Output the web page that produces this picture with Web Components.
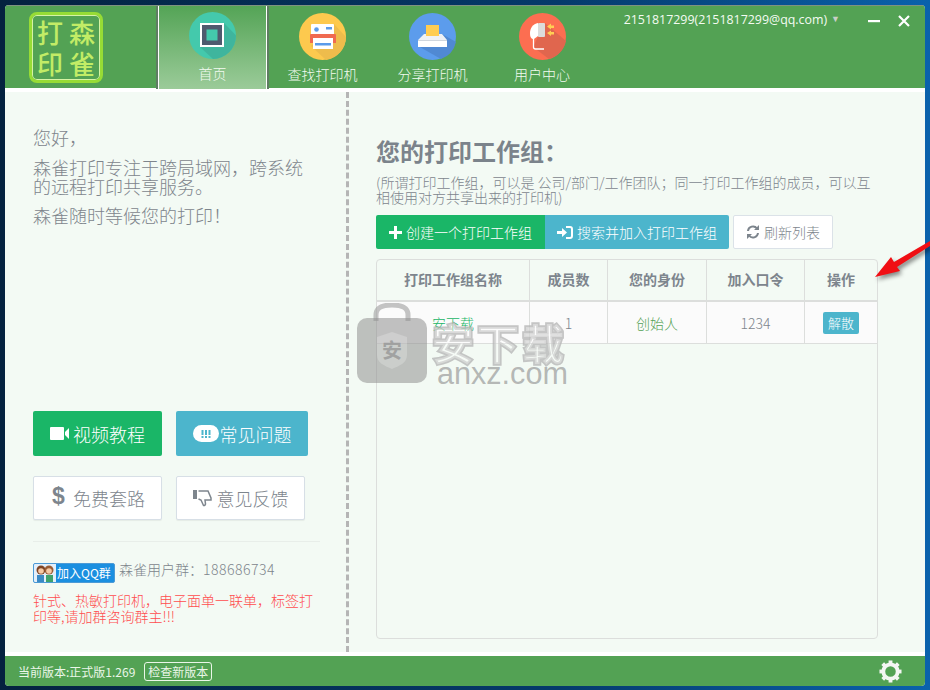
<!DOCTYPE html>
<html lang="zh-CN">
<head>
<meta charset="utf-8">
<title>森雀打印</title>
<style>
    html, body { margin: 0; height: 100%; }
    body {
        position: relative;
        width: 930px;
        height: 690px;
        overflow: hidden;
        background: linear-gradient(90deg, #04223f 0%, #053a6b 60%, #0a62ac 100%);
        font-family: "Noto Sans CJK SC", "Liberation Sans", sans-serif;
    }
</style>
</head>
<body>
<app-window>
    <nav-bar slot="top"></nav-bar>
    <side-panel slot="left"></side-panel>
    <group-panel slot="right"></group-panel>
    <status-bar slot="bottom"></status-bar>
</app-window>
<red-arrow></red-arrow>

<script>
    (function () {
        'use strict';

        const FONT = '"Noto Sans CJK SC", "Liberation Sans", sans-serif';

        function define(name, html) {
            customElements.define(name, class extends HTMLElement {
                constructor() {
                    super();
                    this.attachShadow({mode: 'open'}).innerHTML = html;
                }
            });
        }

        define('app-window', `
            <style>
                :host {
                    display: flex;
                    flex-direction: column;
                    position: relative;
                    box-sizing: border-box;
                    width: 920px;
                    height: 681px;
                    margin: 5px;
                    background: #fff;
                    border-radius: 4px;
                    overflow: hidden;
                    font-family: ${FONT};
                }
                .top { display: block; height: 83px; flex: none; }
                .middle {
                    display: flex;
                    flex: 1;
                    min-height: 0;
                    margin-top: 4px;
                    background: #f3faf4;
                }
                .bottom { display: block; margin-top: 4px; flex: none; }
                .mark { position: absolute; left: 352px; top: 298px; }
            </style>
            <div class="top"><slot name="top"></slot></div>
            <div class="middle">
                <slot name="left"></slot>
                <slot name="right"></slot>
            </div>
            <div class="bottom"><slot name="bottom"></slot></div>
            <water-mark class="mark"></water-mark>
        `);

        // sits on the page, not in the window: it runs out over the desktop
        define('red-arrow', `
            <style>
                :host { display: block; position: absolute; left: 870px; top: 235px; width: 60px; height: 50px; }
                svg { display: block; overflow: visible; filter: drop-shadow(2px 3px 2px rgba(0, 0, 0, .45)); }
            </style>
            <svg width="60" height="50" viewBox="0 0 60 50">
                <path d="M5 42 L21 22 L24 27 L60 6 L60 11 L27 32 L30 36 Z" fill="#f00f14"/>
            </svg>
        `);

        define('water-mark', `
            <style>
                :host {
                    display: block;
                    width: 220px;
                    height: 84px;
                    pointer-events: none;
                }
                .box { display: flex; gap: 5px; }
                .badge { flex: none; display: block; }
                .words { display: flex; flex-direction: column; }
                .cn {
                    font: 700 42px/42px "Noto Sans CJK SC", sans-serif;
                    letter-spacing: 3px;
                    color: rgba(255, 255, 255, .35);
                    -webkit-text-stroke: 3.5px #b4b4b4;
                    paint-order: stroke fill;
                    opacity: .75;
                    margin-top: 18px;
                    white-space: nowrap;
                }
                .en {
                    font: 30.6px/30px "Liberation Sans", sans-serif;
                    color: rgba(150, 150, 150, .68);
                    margin: -5px 0 0 5px;
                    white-space: nowrap;
                }
            </style>
            <div class="box">
                <svg class="badge" width="70" height="80" viewBox="0 0 70 80">
                    <path d="M19 18 V12 C19 5 24 2 35 2 C46 2 51 5 51 12 V18" fill="none" stroke="#9e9e9e" stroke-opacity=".6" stroke-width="5"/>
                    <rect x="0" y="15" width="70" height="65" rx="10" fill="#8f8f8f" fill-opacity=".55"/>
                    <path d="M20 34 L35 29 L50 34 V52 C50 60 42 63 35 66 C28 63 20 60 20 52 Z" fill="#fff" fill-opacity=".22"/>
                    <text x="35" y="55" font-size="20" font-weight="700" text-anchor="middle" fill="#8f8f8f" fill-opacity=".7">安</text>
                </svg>
                <div class="words">
                    <div class="cn">安下载</div>
                    <div class="en">anxz.com</div>
                </div>
            </div>
        `);

        define('nav-item', `
            <style>
                :host {
                    display: flex;
                    flex-direction: column;
                    align-items: center;
                    box-sizing: border-box;
                    width: var(--w, 110px);
                    height: 83px;
                    padding-top: 7px;
                    color: #fff;
                    font-size: 14px;
                    font-weight: 300;
                }
                :host([active]) {
                    padding-top: 6px;
                    background: linear-gradient(180deg, #54a456 0%, #9bcb99 100%);
                    border-left: 1px solid #fff;
                    border-right: 1px solid #fff;
                    box-shadow: -2px 0 0 #5f7d62, 2px 0 0 #5f7d62;
                }
                .icon { width: 47px; height: 47px; display: block; }
                .label { margin-top: 6px; line-height: 17px; white-space: nowrap; color: #f2faf0; }
            </style>
            <div class="icon"><slot name="icon"></slot></div>
            <div class="label"><slot></slot></div>
        `);

        define('nav-bar', `
            <style>
                :host {
                    display: flex;
                    box-sizing: border-box;
                    height: 83px;
                    background: #53a254;
                    border-top: 1px solid #7f9280;
                    position: relative;
                    color: #fff;
                }
                .logo {
                    flex: none;
                    box-sizing: border-box;
                    width: 74px;
                    height: 71px;
                    margin: 6px 0 0 24px;
                    border: 3px solid #97dc35;
                    box-shadow: inset 0 0 0 1px #d6f3a4;
                    border-radius: 8px;
                    display: grid;
                    grid-template-columns: 1fr 1fr;
                    justify-items: center;
                    align-items: center;
                    color: #c2ec66;
                    padding: 1px 2px;
                }
                .logo span { font: 500 26px/30px "Noto Sans CJK SC", sans-serif; }
                .items { display: flex; margin-left: 55px; }
                nav-item:nth-child(1) { --w: 109px; }
                nav-item:nth-child(2) { --w: 111px; }
                nav-item:nth-child(3) { --w: 109px; }
                nav-item:nth-child(4) { --w: 110px; }
                .account {
                    margin-left: auto;
                    display: flex;
                    align-items: flex-start;
                    padding: 7px 15px 0 0;
                    font: 12.4px/14px "Open Sans", "Liberation Sans", sans-serif;
                    color: #f4fbf2;
                }
                .caret { font-size: 9px; color: #c8cfc8; margin: -1px 0 0 4px; }
                .win { display: flex; gap: 18px; margin: 2px 0 0 28px; }
                svg { display: block; }
            </style>
            <div class="logo"><span>打</span><span>森</span><span>印</span><span>雀</span></div>
            <div class="items">
                <nav-item active>
                    <svg slot="icon" width="47" height="47" viewBox="0 0 47 47">
                        <circle cx="23.5" cy="23.5" r="23.5" fill="#44c9ac"/>
                        <path d="M35 11 L47 23.5 A23.5 23.5 0 0 1 24 47 L11 35 Z" fill="#3fb59d"/>
                        <rect x="11" y="11" width="24" height="24" fill="#fff"/>
                        <rect x="13" y="13" width="20" height="20" fill="#4f5a6e"/>
                        <rect x="17.5" y="17.5" width="11" height="11" fill="#44c9ac"/>
                    </svg>
                    首页
                </nav-item>
                <nav-item>
                    <svg slot="icon" width="47" height="47" viewBox="0 0 47 47">
                        <circle cx="23.5" cy="23.5" r="23.5" fill="#fdc94e"/>
                        <path d="M35 11 L47 24 A23.5 23.5 0 0 1 27 47 L12 33 Z" fill="#eebc4c"/>
                        <rect x="12" y="11" width="23" height="11" rx="1" fill="#fff"/>
                        <circle cx="17.5" cy="16.5" r="2.3" fill="#5b9bea"/>
                        <rect x="27" y="14" width="6" height="2.5" fill="#5b9bea"/>
                        <path d="M12 21 H36 Q37 21 37 22 V30 H34 V25 H14 V30 H11 V22 Q11 21 12 21 Z" fill="#f06a50"/>
                        <rect x="14" y="25" width="20" height="11" fill="#fff"/>
                        <rect x="16" y="30" width="16" height="2.5" fill="#5b9bea"/>
                    </svg>
                    查找打印机
                </nav-item>
                <nav-item>
                    <svg slot="icon" width="47" height="47" viewBox="0 0 47 47">
                        <circle cx="23.5" cy="23.5" r="23.5" fill="#5c9cec"/>
                        <path d="M33 21 L47 29 A23.5 23.5 0 0 1 32 46 L9 33 Z" fill="#5089d3"/>
                        <rect x="17" y="12" width="13" height="11" fill="#ffcd52"/>
                        <path d="M15 21 H17 V23 H30 V21 H33 L38 27 H9 Z" fill="#eef1f5"/>
                        <rect x="9" y="27" width="29" height="7" fill="#fff"/>
                        <rect x="9" y="27" width="29" height="1" fill="#cfd6de"/>
                    </svg>
                    分享打印机
                </nav-item>
                <nav-item>
                    <svg slot="icon" width="47" height="47" viewBox="0 0 47 47">
                        <circle cx="23.5" cy="23.5" r="23.5" fill="#fc6e51"/>
                        <path d="M26 10 L47 28 A23.5 23.5 0 0 1 30 46 L14 34 Z" fill="#e0664e"/>
                        <path d="M19 10 C14 11 11 15 11 20 C11 24 12 26 15 26 L19 23 Z" fill="#fff"/>
                        <rect x="19" y="10" width="7" height="14" rx="1" fill="#dcdcdc"/>
                        <path d="M14.5 26 V34 Q14.5 36 16.5 36 H25" fill="none" stroke="#fff" stroke-width="1.3"/>
                        <path d="M28 13.5 L32 10.5 V12.5 H35 V15 H32 V16.5 Z M28 20 L32 17.5 V19 H35 V21.5 H32 V23 Z" fill="#ffce54"/>
                    </svg>
                    用户中心
                </nav-item>
            </div>
            <div class="account">
                <span>2151817299(2151817299@qq.com)</span>
                <span class="caret">▼</span>
                <div class="win">
                    <svg width="12" height="12" viewBox="0 0 12 12"><rect x="0" y="5" width="12" height="2.2" fill="#fff"/></svg>
                    <svg width="12" height="12" viewBox="0 0 12 12"><path d="M1 1 L11 11 M11 1 L1 11" stroke="#fff" stroke-width="2.2" fill="none"/></svg>
                </div>
            </div>
        `);

        define('big-button', `
            <style>
                :host {
                    display: flex;
                    align-items: center;
                    justify-content: center;
                    box-sizing: border-box;
                    height: var(--h, 45px);
                    width: var(--w, 129px);
                    border-radius: 2px;
                    font-size: 18px;
                    white-space: nowrap;
                    gap: var(--gap, 4px);
                }
                :host([kind=green]) { background: #1ab667; color: #fff; }
                :host([kind=blue]) { background: #4cb5cc; color: #fff; }
                :host([kind=plain]) {
                    background: #fff;
                    color: #7d858d;
                    border: 1px solid #d7dfe6;
                    box-shadow: 0 1px 1px rgba(0, 0, 0, .06);
                }
            </style>
            <slot name="icon"></slot><slot></slot>
        `);

        define('side-panel', `
            <style>
                :host {
                    display: flex;
                    flex-direction: column;
                    box-sizing: border-box;
                    flex: none;
                    width: 344px;
                    padding: 36px 26px 0 28px;
                    border-right: 3px dashed #b5b5b5;
                    color: #7e858c;
                    font-size: 18px;
                    font-weight: 300;
                    position: relative;
                }
                p { margin: 0; line-height: 19px; }
                .hello { height: 30px; }
                .intro { width: 285px; margin-bottom: 10px; }
                .grid {
                    display: grid;
                    grid-template-columns: 129px 132px;
                    column-gap: 14px;
                    row-gap: 20px;
                    margin-top: 186px;
                }
                .rule { height: 1px; background: #e8eee9; margin-top: 21px; }
                .qq { display: flex; align-items: flex-start; gap: 4px; margin-top: 21px; font-size: 14px; line-height: 14px; }
                .qq .num { letter-spacing: .5px; }
                .qq .group { margin-top: -1px; }
                .qqbtn {
                    display: flex;
                    align-items: center;
                    box-sizing: border-box;
                    width: 82px;
                    height: 20px;
                    background: #1b8fe0;
                    border: 1px solid #4c9ad6;
                    border-radius: 2px;
                    color: #fff;
                    font-size: 12px;
                    font-weight: 400;
                    white-space: nowrap;
                    overflow: hidden;
                }
                .qqbtn .face { flex: none; width: 22px; height: 18px; background: #e3effa; margin-right: 1px; display: block; }
                .warn { margin-top: 9px; font-size: 14px; line-height: 16px; color: #ff4d4f; width: 285px; }
                svg { display: block; }
            </style>
            <p class="hello">您好，</p>
            <p class="intro">森雀打印专注于跨局域网，跨系统的远程打印共享服务。</p>
            <p>森雀随时等候您的打印！</p>
            <div class="grid">
                <big-button kind="green">
                    <svg slot="icon" width="19" height="13" viewBox="0 0 19 13"><rect width="14" height="13" rx="1" fill="#fff"/><path d="M15 5 L19 1 V12 L15 8 Z" fill="#fff"/></svg>
                    视频教程
                </big-button>
                <big-button kind="blue" style="--w:132px;--gap:1px">
                    <svg slot="icon" width="26" height="17" viewBox="0 0 26 17"><rect width="26" height="17" rx="8.5" fill="#fff"/><path d="M8.5 5 H10.5 V10 H8.5 Z M12 5 H14 V10 H12 Z M15.5 5 H17.5 V10 H15.5 Z M8.5 11 H10.5 V13 H8.5 Z M12 11 H14 V13 H12 Z M15.5 11 H17.5 V13 H15.5 Z" fill="#4cb5cc"/></svg>
                    常见问题
                </big-button>
                <big-button kind="plain" style="--h:44px;--gap:8px;padding-left:2px">
                    <span slot="icon" style="font:700 23px/23px 'Liberation Sans',sans-serif;margin-top:-3px">$</span>
                    免费套路
                </big-button>
                <big-button kind="plain" style="--h:44px;--gap:5px">
                    <svg slot="icon" width="19" height="18" viewBox="0 0 19 18"><rect x="0" y="1" width="4" height="9" fill="#7d858d"/><path d="M5.5 2 H15 L18 9 V11 H12 L12.5 15 Q12 17 10.5 16.5 L8 11 L5.5 10" fill="none" stroke="#7d858d" stroke-width="1.5"/></svg>
                    意见反馈
                </big-button>
            </div>
            <div class="rule"></div>
            <div class="qq">
                <div class="qqbtn">
                    <svg class="face" viewBox="0 0 22 18">
                        <circle cx="7" cy="6" r="4.5" fill="#7d4425"/><circle cx="15" cy="6" r="4.5" fill="#9a5c34"/>
                        <circle cx="7" cy="7" r="2.8" fill="#f6c9a4"/><circle cx="15" cy="7" r="2.8" fill="#f6c9a4"/>
                        <rect x="3" y="11" width="7" height="7" fill="#3a8ac4"/><rect x="12" y="11" width="7" height="7" fill="#3fa36c"/>
                    </svg>
                    加入QQ群
                </div>
                <span class="group">森雀用户群：<span class="num">188686734</span></span>
            </div>
            <div class="warn">针式、热敏打印机，电子面单一联单，标签打印等,请加群咨询群主!!!</div>
        `);

        define('group-table', `
            <style>
                :host {
                    display: block;
                    box-sizing: border-box;
                    height: 380px;
                    border: 1px solid #dcdedc;
                    border-radius: 4px;
                    font-size: 14px;
                    color: #7d858d;
                }
                .row { display: grid; box-sizing: border-box; grid-template-columns: 153px 78px 99px 98px 1fr; }
                .row > div {
                    display: flex;
                    align-items: center;
                    justify-content: center;
                    border-right: 1px solid #dcdedc;
                }
                .row > div:last-child { border-right: 0; }
                .head { height: 42px; border-bottom: 2px solid #dcdedc; font-weight: 700; }
                .head > div { padding-bottom: 2px; }
                .body { height: 42px; border-bottom: 1px solid #dcdedc; background: #fbfbfb; font-weight: 300; }
                .name { color: #1ab667; }
                .role { color: #53a254; }
                .tag {
                    background: #4cb5cc;
                    color: #fff;
                    font-size: 13px;
                    line-height: 22px;
                    padding: 0 5px;
                    border-radius: 2px;
                }
            </style>
            <div class="row head">
                <div>打印工作组名称</div><div>成员数</div><div>您的身份</div><div>加入口令</div><div>操作</div>
            </div>
            <div class="row body">
                <div class="name">安下载</div><div>1</div><div class="role">创始人</div><div>1234</div><div><span class="tag">解散</span></div>
            </div>
        `);

        define('group-panel', `
            <style>
                :host {
                    display: block;
                    box-sizing: border-box;
                    flex: 1;
                    padding: 41px 0 0 27px;
                    color: #7d858d;
                }
                h1 { margin: 0; font-size: 24px; line-height: 36px; font-weight: 700; color: #7b838b; }
                p { margin: 6px 0 0; font-size: 14px; line-height: 15px; width: 500px; font-weight: 300; }
                .actions { display: flex; margin: 10px 0 10px; font-size: 14px; font-weight: 300; }
                .btn {
                    display: flex;
                    align-items: center;
                    justify-content: center;
                    gap: 4px;
                    height: 34px;
                    box-sizing: border-box;
                    white-space: nowrap;
                }
                .a { width: 169px; background: #1ab667; color: #fff; border-radius: 2px 0 0 2px; }
                .b { width: 184px; background: #4cb5cc; color: #fff; border-radius: 0 2px 2px 0; }
                .c { width: 100px; margin-left: 4px; background: #fff; color: #7d858d; border: 1px solid #dbe2e8; border-radius: 2px; }
                svg { display: block; }
                group-table { width: 502px; }
            </style>
            <h1>您的打印工作组：</h1>
            <p>(所谓打印工作组，可以是 公司/部门/工作团队；同一打印工作组的成员，可以互相使用对方共享出来的打印机)</p>
            <div class="actions">
                <div class="btn a"><svg width="13" height="13" viewBox="0 0 13 13"><path d="M5 0 H8 V5 H13 V8 H8 V13 H5 V8 H0 V5 H5 Z" fill="#fff"/></svg>创建一个打印工作组</div>
                <div class="btn b"><svg width="16" height="13" viewBox="0 0 16 13"><path d="M0 5 H5 V2 L10 6.5 L5 11 V8 H0 Z" fill="#fff"/><path d="M9 1 H13 Q15 1 15 3 V10 Q15 12 13 12 H9" fill="none" stroke="#fff" stroke-width="2"/></svg>搜索并加入打印工作组</div>
                <div class="btn c"><svg width="14" height="14" viewBox="0 0 14 14"><path d="M2 6 A5 5 0 0 1 11 3.5 M12 8 A5 5 0 0 1 3 10.5" fill="none" stroke="#7d858d" stroke-width="2"/><path d="M13 0 V5 H8 Z M1 14 V9 H6 Z" fill="#7d858d"/></svg>刷新列表</div>
            </div>
            <group-table></group-table>
        `);

        define('status-bar', `
            <style>
                :host {
                    display: flex;
                    align-items: center;
                    box-sizing: border-box;
                    height: 30px;
                    padding: 0 23px 0 13px;
                    background: #53a254;
                    color: #eaf6e8;
                    font-size: 12px;
                }
                .check {
                    margin-left: 9px;
                    border: 1px solid #eaf6e8;
                    border-radius: 3px;
                    padding: 0 3px;
                    line-height: 17px;
                }
                svg { margin-left: auto; display: block; }
            </style>
            <span>当前版本:正式版1.269</span>
            <span class="check">检查新版本</span>
            <svg width="23" height="23" viewBox="0 0 24 24">
                <circle cx="12" cy="12" r="7.5" fill="none" stroke="#f3f6f3" stroke-width="4"/>
                <g fill="#f3f6f3">
                    <rect x="10" y="0.5" width="4" height="5"/>
                    <rect x="10" y="18.5" width="4" height="5"/>
                    <rect x="0.5" y="10" width="5" height="4"/>
                    <rect x="18.5" y="10" width="5" height="4"/>
                    <rect x="10" y="0.5" width="4" height="5" transform="rotate(45 12 12)"/>
                    <rect x="10" y="18.5" width="4" height="5" transform="rotate(45 12 12)"/>
                    <rect x="0.5" y="10" width="5" height="4" transform="rotate(45 12 12)"/>
                    <rect x="18.5" y="10" width="5" height="4" transform="rotate(45 12 12)"/>
                </g>
            </svg>
        `);
    })();
</script>
</body>
</html>
